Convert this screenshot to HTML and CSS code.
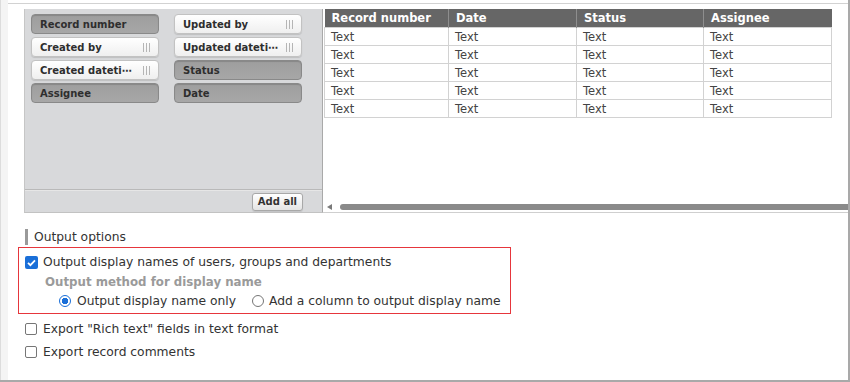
FILE: index.html
```html
<!DOCTYPE html>
<html>
<head>
<meta charset="utf-8">
<link rel="stylesheet" href="styles.css">
</head>
<body>
<div class="frame">
  <div class="top">
    <div class="builder">
      <div class="panel">
        <div class="chips">
          <div class="chip used">Record number</div>
          <div class="chip free"><span class="label">Updated by</span><svg class="grip" width="7" height="9" viewBox="0 0 7 9"><path d="M0.5 0v9M3.5 0v9M6.5 0v9" stroke="#b5b5b5" stroke-width="1"/></svg></div>
          <div class="chip free"><span class="label">Created by</span><svg class="grip" width="7" height="9" viewBox="0 0 7 9"><path d="M0.5 0v9M3.5 0v9M6.5 0v9" stroke="#b5b5b5" stroke-width="1"/></svg></div>
          <div class="chip free"><span class="label">Updated dateti⋯</span><svg class="grip" width="7" height="9" viewBox="0 0 7 9"><path d="M0.5 0v9M3.5 0v9M6.5 0v9" stroke="#b5b5b5" stroke-width="1"/></svg></div>
          <div class="chip free"><span class="label">Created dateti⋯</span><svg class="grip" width="7" height="9" viewBox="0 0 7 9"><path d="M0.5 0v9M3.5 0v9M6.5 0v9" stroke="#b5b5b5" stroke-width="1"/></svg></div>
          <div class="chip used">Status</div>
          <div class="chip used">Assignee</div>
          <div class="chip used">Date</div>
        </div>
        <div class="panel-foot">
          <button class="add-all">Add all</button>
        </div>
      </div>
      <div class="preview">
        <table class="grid">
          <colgroup>
            <col class="c1"><col class="c2"><col class="c3"><col class="c4">
          </colgroup>
          <thead>
            <tr><th>Record number</th><th>Date</th><th>Status</th><th>Assignee</th></tr>
          </thead>
          <tbody>
            <tr><td>Text</td><td>Text</td><td>Text</td><td>Text</td></tr>
            <tr><td>Text</td><td>Text</td><td>Text</td><td>Text</td></tr>
            <tr><td>Text</td><td>Text</td><td>Text</td><td>Text</td></tr>
            <tr><td>Text</td><td>Text</td><td>Text</td><td>Text</td></tr>
            <tr><td>Text</td><td>Text</td><td>Text</td><td>Text</td></tr>
          </tbody>
        </table>
        <div class="hscroll">
          <span class="arrow"></span>
          <span class="thumb"></span>
        </div>
      </div>
    </div>
  </div>

  <div class="section-title">Output options</div>

  <div class="highlight">
    <div class="row first">
      <span class="cb checked"><svg width="13" height="13" viewBox="0 0 13 13"><path d="M3 6.8l2.4 2.4L10 4.4" fill="none" stroke="#fff" stroke-width="1.8"/></svg></span>
      <span>Output display names of users, groups and departments</span>
    </div>
    <div class="method-title">Output method for display name</div>
    <div class="row radios">
      <span class="radio on"></span>
      <span class="rlabel">Output display name only</span>
      <span class="radio off"></span>
      <span class="rlabel">Add a column to output display name</span>
    </div>
  </div>

  <div class="row option">
    <span class="cb"></span>
    <span>Export "Rich text" fields in text format</span>
  </div>
  <div class="row option second">
    <span class="cb"></span>
    <span>Export record comments</span>
  </div>
</div>
</body>
</html>
```

FILE: styles.css
```css
html, body {
  margin: 0;
  padding: 0;
  background: #fff;
}
body {
  font-family: "DejaVu Sans", Verdana, sans-serif;
  color: #333;
  font-size: 12.3px;
}
.frame {
  width: 850px;
  height: 382px;
  box-sizing: border-box;
  border-right: 2px solid #a9a9a9;
  border-bottom: 2px solid #a9a9a9;
  padding-left: 8px;
  background: linear-gradient(to right, #dcdcdc 0, #dcdcdc 1px, #f4f4f4 1px, #f4f4f4 8px, #fff 8px);
  overflow: hidden;
}
.top {
  margin-top: 3px;
  border-top: 1px solid #d2d2d2;
  padding: 5px 0 0 16px;
  background: #fff;
}
.builder {
  display: flex;
  height: 204px;
}
.panel {
  width: 298px;
  flex: none;
  box-sizing: border-box;
  background: #d8d9db;
  border-left: 1px solid #c6c6c6;
  border-bottom: 1px solid #c2c2c2;
  display: flex;
  flex-direction: column;
}
.chips {
  flex: 1;
  padding: 5px 0 0 6px;
  display: grid;
  grid-template-columns: 128px 128px;
  grid-auto-rows: 20px;
  column-gap: 15px;
  row-gap: 3px;
  align-content: start;
}
.chip {
  box-sizing: border-box;
  border-radius: 4px;
  font-weight: bold;
  font-size: 10px;
  color: #2e2e2e;
  padding: 0 7px 0 8px;
  display: flex;
  align-items: center;
  justify-content: space-between;
  white-space: nowrap;
}
.chip.used {
  background: linear-gradient(#9e9e9e, #a7a7a7);
  border: 1px solid #898989;
  box-shadow: inset 0 1px 1px rgba(0,0,0,0.15);
}
.chip.free {
  background: linear-gradient(#ffffff, #efefef);
  border: 1px solid #c2c2c2;
  box-shadow: 0 1px 1px rgba(0,0,0,0.12);
}
.grip {
  flex: none;
  margin-right: 1px;
}
.panel-foot {
  height: 23px;
  box-sizing: border-box;
  border-top: 1px solid #b9b9b9;
  box-shadow: inset 0 1px 0 #e6e6e6;
  display: flex;
  align-items: center;
  justify-content: flex-end;
  padding: 1px 19px 0 0;
}
.add-all {
  font-family: "DejaVu Sans", Verdana, sans-serif;
  font-weight: bold;
  font-size: 10px;
  color: #333;
  height: 18px;
  padding: 0 5px;
  border: 1px solid #a8a8a8;
  border-radius: 3px;
  background: linear-gradient(#ffffff, #e4e4e4);
  box-shadow: 0 1px 1px rgba(0,0,0,0.1);
}
.preview {
  flex: 1;
  box-sizing: border-box;
  border-left: 1px solid #a9a9a9;
  border-bottom: 1px solid #cfcfcf;
  display: flex;
  flex-direction: column;
  margin-right: -2px;
}
.grid {
  border-collapse: collapse;
  margin-left: 1px;
  width: 507px;
  table-layout: fixed;
}
.grid .c1 { width: 124px; }
.grid .c2 { width: 128px; }
.grid .c3 { width: 127px; }
.grid .c4 { width: 128px; }
.grid th {
  background: #666;
  color: #fff;
  font-weight: bold;
  font-size: 11.5px;
  text-align: left;
  height: 18px;
  padding: 0 0 0 7px;
  border-left: 1px solid #8e8e8e;
  line-height: 18px;
  overflow: hidden;
  white-space: nowrap;
}
.grid th:first-child { border-left: none; }
.grid td {
  border: 1px solid #d2d2d2;
  height: 17px;
  padding: 0 0 0 6px;
  font-size: 11.5px;
  color: #444;
  line-height: 16px;
}
.hscroll {
  margin-top: auto;
  margin-bottom: 2px;
  height: 7px;
  display: flex;
  align-items: center;
}
.arrow {
  width: 0;
  height: 0;
  margin-left: 4px;
  border-right: 5px solid #7a7a7a;
  border-top: 3.5px solid transparent;
  border-bottom: 3.5px solid transparent;
}
.thumb {
  flex: 1;
  height: 6px;
  margin-left: 8px;
  border-radius: 3px;
  background: #8a8a8a;
}
.section-title {
  margin: 16px 0 0 17px;
  height: 16px;
  line-height: 16px;
  border-left: 3px solid #9a9a9a;
  padding-left: 6px;
}
.highlight {
  margin: 2px 0 0 10px;
  width: 493px;
  height: 67px;
  box-sizing: border-box;
  border: 1px solid #e6363c;
}
.row {
  display: flex;
  align-items: center;
  white-space: nowrap;
}
.row.first {
  height: 20px;
  margin-top: 4px;
  padding-left: 6px;
}
.cb {
  width: 12px;
  height: 12px;
  box-sizing: border-box;
  border: 1px solid #767676;
  border-radius: 2px;
  background: #fff;
  margin-right: 6px;
  flex: none;
  display: flex;
  align-items: center;
  justify-content: center;
}
.cb.checked {
  width: 13px;
  height: 13px;
  border: none;
  background: #1a6fd8;
  margin-right: 5px;
}
.cb svg { display: block; }
.method-title {
  height: 20px;
  line-height: 20px;
  padding-left: 26px;
  font-weight: bold;
  font-size: 11.8px;
  color: #9a9a9a;
}
.radios {
  height: 17px;
  padding-left: 40px;
}
.radio {
  width: 12px;
  height: 12px;
  box-sizing: border-box;
  border-radius: 50%;
  flex: none;
}
.radio.on {
  border: 1.5px solid #1a6fd8;
  background: radial-gradient(circle, #1a6fd8 0, #1a6fd8 3px, #fff 3.5px);
}
.radio.off {
  border: 1px solid #767676;
  background: #fff;
  margin-left: 16px;
}
.rlabel {
  margin-left: 6px;
}
.rlabel:last-child { margin-left: 5px; }
.option {
  height: 18px;
  margin: 6px 0 0 17px;
}
.option.second {
  margin-top: 5px;
}
```
